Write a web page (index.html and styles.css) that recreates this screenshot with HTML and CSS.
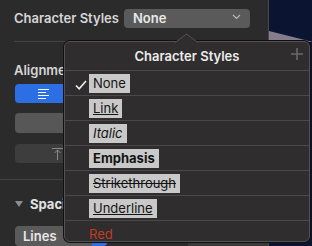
FILE: index.html
```html
<!DOCTYPE html>
<html lang="en">
<head>
    <meta charset="UTF-8">
    <meta name="viewport" content="width=device-width, initial-scale=1.0">
    <title>Character Styles</title>
    <link rel="stylesheet" href="styles.css">
</head>
<body>
    <div class="window">
        <!-- inspector sidebar -->
        <div class="sidebar">
            <div class="style-row">
                <span class="label">Character Styles</span>
                <div class="popup-btn">
                    <span>None</span>
                    <svg class="chevron" width="9" height="6" viewBox="0 0 9 6">
                        <path d="M1 1 L4.5 4.5 L8 1" fill="none" stroke="#b8b8b8" stroke-width="1.2"/>
                    </svg>
                </div>
            </div>

            <div class="section">
                <div class="label">Alignment</div>
                <div class="seg seg-blue">
                    <svg width="11" height="10" viewBox="0 0 11 10">
                        <path d="M0 0.5 H11 M0 3.5 H8 M0 6.5 H11 M0 9.5 H8" stroke="#ffffff" stroke-width="1"/>
                    </svg>
                </div>
                <div class="seg seg-gray"></div>
                <div class="seg seg-dark">
                    <svg width="11" height="12" viewBox="0 0 11 12">
                        <path d="M0 0.5 H11 M5.5 2 V12 M2.5 5 L5.5 2 L8.5 5" fill="none" stroke="#8a8a8a" stroke-width="1"/>
                    </svg>
                </div>
            </div>

            <div class="spacing">
                <div class="disclosure">
                    <span class="tri"></span>
                    <span class="label">Spacing</span>
                </div>
                <div class="lines-row">
                    <div class="lines-btn">Lines<span class="lines-arrow"></span></div>
                    <div class="stepper"><span class="knob"></span></div>
                </div>
            </div>
        </div>

        <!-- desktop showing on the right -->
        <div class="desktop"></div>

        <!-- popover menu -->
        <div class="popover">
            <div class="pop-arrow"></div>
            <div class="pop-head">
                <span>Character Styles</span>
                <svg class="plus" width="12" height="12" viewBox="0 0 12 12">
                    <path d="M6 0 V12 M0 6 H12" stroke="#6b6869" stroke-width="1.6"/>
                </svg>
            </div>
            <ul class="menu">
                <li>
                    <svg class="check" width="12" height="10" viewBox="0 0 12 10">
                        <path d="M1 5.5 L4.2 8.8 L11 1" fill="none" stroke="#f0f0f0" stroke-width="1.6"/>
                    </svg>
                    <span class="chip">None</span>
                </li>
                <li><span class="chip link">Link</span></li>
                <li><span class="chip italic">Italic</span></li>
                <li><span class="chip bold">Emphasis</span></li>
                <li><span class="chip strike">Strikethrough</span></li>
                <li><span class="chip under">Underline</span></li>
                <li><span class="red">Red</span></li>
            </ul>
        </div>
    </div>
</body>
</html>
```

FILE: styles.css
```css
body {
    margin: 0;
    font-family: Inter, 'Liberation Sans', sans-serif;
    background-color: #2c2b2c;
    overflow: hidden;
}

.window {
    position: relative;
    display: flex;
    width: 312px;
    height: 246px;
}

/* inspector sidebar */
.sidebar {
    width: 268px;
    flex-shrink: 0;
    background-color: #2c2b2c;
    border-right: 1px solid #4a4a4a;
}

.label {
    font-size: 13px;
    font-weight: 600;
    color: #d6d6d6;
}

.style-row {
    display: flex;
    align-items: center;
    height: 40px;
    margin-left: 14px;
    padding-bottom: 1px;
    border-bottom: 1px solid #444344;
    box-sizing: border-box;
    height: 42px;
}

.style-row .label {
    width: 110px;
    margin-top: -4px;
}

.popup-btn {
    display: flex;
    align-items: center;
    justify-content: space-between;
    width: 126px;
    height: 19px;
    margin-top: -4px;
    padding: 0 9px 0 9px;
    box-sizing: border-box;
    border-radius: 4px;
    background-color: #5b5a5b;
    color: #e8e8e8;
    font-size: 13px;
    font-weight: 600;
}

.chevron {
    margin-top: -2px;
}

.section {
    padding: 20px 0 0 14px;
    height: 138px;
    margin-left: 0;
    border-bottom: 1px solid #444344;
    box-sizing: border-box;
}

.section .label {
    height: 22px;
}

.seg {
    display: flex;
    align-items: center;
    justify-content: center;
    width: 48px;
    height: 19px;
    margin-left: 1px;
    padding-right: 0;
    border-radius: 4px;
}

.seg-blue {
    width: 100px;
    background-color: #2c6fe4;
    margin-top: 0;
    justify-content: flex-start;
    padding-left: 23px;
    box-sizing: border-box;
}

.seg-gray {
    width: 100px;
    height: 20px;
    margin-top: 10px;
    background-color: #585758;
}

.seg-dark {
    width: 100px;
    margin-top: 11px;
    background-color: #3e3d3e;
    justify-content: flex-start;
    padding-left: 37px;
    box-sizing: border-box;
}

.spacing {
    margin-left: 14px;
    border-top: none;
}

.disclosure {
    display: flex;
    align-items: center;
    gap: 7px;
    height: 18px;
    margin-top: 15px;
    padding-left: 1px;
}

.tri {
    width: 0;
    height: 0;
    border-left: 4px solid transparent;
    border-right: 4px solid transparent;
    border-top: 6px solid #8c8c8c;
}

.disclosure .label {
    color: #e2e2e2;
    font-weight: 700;
}

.lines-row {
    display: flex;
    margin-top: 13px;
    padding-left: 1px;
}

.lines-btn {
    display: flex;
    align-items: center;
    width: 92px;
    height: 20px;
    padding-left: 8px;
    box-sizing: border-box;
    border-radius: 4px;
    background-color: #5b5a5b;
    color: #e8e8e8;
    font-size: 13px;
    font-weight: 600;
    position: relative;
}

.lines-arrow {
    margin-left: auto;
    width: 15px;
    height: 20px;
    border-radius: 0 4px 4px 0;
    background-color: #2c6fe4;
}

.stepper {
    width: 80px;
    height: 20px;
    margin-left: 81px;
    background-color: #3a393a;
    display: flex;
    justify-content: flex-end;
}

.knob {
    width: 8px;
    height: 8px;
    margin: 2px 18px 0 0;
    border-radius: 50%;
    background-color: #6e6d6e;
}

/* desktop wallpaper on the right */
.desktop {
    flex: 1;
    position: relative;
    background-color: #0b1531;
}

.desktop::after {
    content: "";
    position: absolute;
    left: 0;
    top: 31px;
    width: 44px;
    height: 11px;
    background-color: #857d8b;
    clip-path: polygon(0 0, 100% 100%, 0 100%);
}

/* popover */
.popover {
    position: absolute;
    left: 64px;
    top: 41px;
    width: 246px;
    height: 201px;
    box-sizing: border-box;
    background-color: #2f2d2e;
    border: 1px solid #535152;
    border-radius: 6px;
    box-shadow: 0 0 0 1px #111;
}

.pop-arrow {
    position: absolute;
    left: 113px;
    top: -8px;
    width: 16px;
    height: 16px;
    background-color: #2f2d2e;
    border-left: 1px solid #535152;
    border-top: 1px solid #535152;
    transform: scaleY(0.75) rotate(45deg);
}

.pop-head {
    position: relative;
    display: flex;
    align-items: center;
    justify-content: center;
    height: 28px;
    border-bottom: 1px solid #4a4849;
    color: #ececec;
    font-size: 13px;
    font-weight: 600;
}

.plus {
    position: absolute;
    right: 6px;
    top: 6px;
}

.menu {
    list-style: none;
    margin: 0;
    padding: 0;
}

.menu li {
    position: relative;
    display: flex;
    align-items: center;
    height: 23px;
    padding: 1px 0 0 24px;
    box-sizing: content-box;
    border-bottom: 1px solid #4a4849;
    font-size: 13px;
}

.menu li:last-child {
    border-bottom: none;
}

.check {
    position: absolute;
    left: 10px;
    top: 9px;
}

.chip {
    display: inline-block;
    height: 19px;
    line-height: 19px;
    padding: 0 4px;
    background-color: #c9c9c9;
    color: #141414;
}

.link,
.under {
    text-decoration: underline;
}

.italic {
    font-style: italic;
}

.bold {
    font-weight: 700;
}

.strike {
    text-decoration: line-through;
}

.red {
    color: #c43a23;
    padding-left: 0;
}
```
